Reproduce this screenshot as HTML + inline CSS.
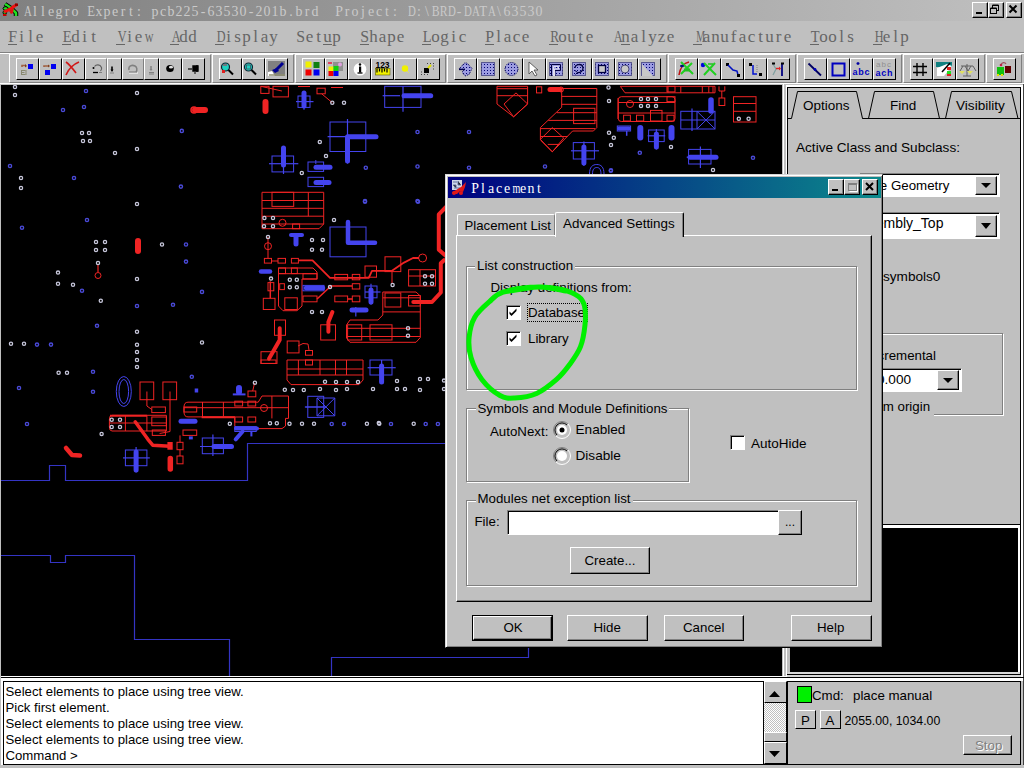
<!DOCTYPE html>
<html><head><meta charset="utf-8">
<style>
*{margin:0;padding:0;box-sizing:border-box}
html,body{width:1024px;height:768px;overflow:hidden;background:#c0c0c0;position:relative;font-family:"Liberation Sans",sans-serif;font-size:13.3px;color:#000}
.a{position:absolute}
.mono{font-family:"Liberation Mono",monospace}
.t{position:absolute;white-space:pre;line-height:1;font-size:13.3px}
.tbtn{position:absolute;width:16px;height:16px;background:#c0c0c0;border-top:1px solid #fff;border-left:1px solid #fff;border-right:1px solid #000;border-bottom:1px solid #000;box-shadow:inset -1px -1px 0 #808080}
.menu{position:absolute;top:31px;font-size:15px;line-height:15px;color:#6a6a6a;white-space:pre;font-family:"Liberation Mono",monospace;transform:scaleY(1.18);transform-origin:0 11.5px}
.menu u{text-decoration:none;display:inline-block;position:relative}
.menu u:after{content:"";position:absolute;left:0;right:1px;top:13px;height:1px;background:#6a6a6a}
.tbox{position:absolute;top:54px;height:29px;border-left:1px solid #fff;border-right:1px solid #808080;border-bottom:1px solid #808080;border-top:1px solid #fff}
.bt{position:absolute;top:58px;height:22px;border-top:1px solid #fff;border-left:1px solid #fff;border-right:1px solid #000;border-bottom:1px solid #000;background:#c0c0c0}
.btn{position:absolute;background:#c0c0c0;border-top:1px solid #fff;border-left:1px solid #fff;border-right:1px solid #000;border-bottom:1px solid #000;box-shadow:inset -1px -1px 0 #808080}
.sunk{position:absolute;border-top:1px solid #808080;border-left:1px solid #808080;border-right:1px solid #fff;border-bottom:1px solid #fff;box-shadow:inset 1px 1px 0 #000}
.grp{position:absolute;border:1px solid #808080;box-shadow:1px 1px 0 #fff, inset 1px 1px 0 #fff}
.glab{position:absolute;background:#c0c0c0;padding:0 2px;white-space:pre;line-height:1;font-size:13.3px}
.cs{position:absolute;font-family:"Liberation Serif",serif;white-space:nowrap}
.c{display:inline-block;text-align:center;font-weight:normal;font-style:normal;position:relative}
.c i{font-style:normal}
.menu2{top:28.3px;font-size:17px;line-height:17px;color:#666}
.menu2 .u:after{content:"";position:absolute;left:0;right:0;top:16px;height:1px;background:#666}
</style></head><body>
<div class="a" style="left:0;top:0;width:1024px;height:21px;background:linear-gradient(to right,#808080,#c0c0c0)"></div>
<svg class="a" style="left:0;top:0" width="22" height="21" viewBox="0 0 22 21">
<path d="M5 4 L11 8 L16 13 L16 16" stroke="#000" stroke-width="4.5" fill="none" stroke-linejoin="round"/>
<path d="M5 4 L11 8 L16 13 L16 16" stroke="#20e020" stroke-width="2.5" fill="none" stroke-linejoin="round"/>
<ellipse cx="5.5" cy="8.5" rx="2.5" ry="1.8" fill="#20e020" stroke="#000" stroke-width="1"/>
<ellipse cx="4.8" cy="12.5" rx="1.8" ry="1.8" fill="#20e020" stroke="#000" stroke-width="1"/>
<path d="M4 12 C8 10 11 9 13 7 L17 4.5" stroke="#f01010" stroke-width="3" fill="none"/>
<path d="M9 11 L14 8 L13 13 L11 14Z" fill="#e01010"/>
<rect x="3" y="14" width="3.5" height="2" fill="#c00000"/><rect x="15" y="3.5" width="3" height="2.5" fill="#900000"/>
</svg>
<div class="cs" style="left:23px;top:5px;font-size:13.9px;line-height:13.9px;color:#cacaca"><b class="c" style="width:8px"><i style="display:inline-block;transform:scaleX(0.781)">A</i></b><b class="c" style="width:8px">l</b><b class="c" style="width:8px">l</b><b class="c" style="width:8px">e</b><b class="c" style="width:8px">g</b><b class="c" style="width:8px">r</b><b class="c" style="width:8px">o</b><b class="c" style="width:8px"></b><b class="c" style="width:8px"><i style="display:inline-block;transform:scaleX(0.923)">E</i></b><b class="c" style="width:8px">x</b><b class="c" style="width:8px">p</b><b class="c" style="width:8px">e</b><b class="c" style="width:8px">r</b><b class="c" style="width:8px">t</b><b class="c" style="width:8px">:</b><b class="c" style="width:8px"></b><b class="c" style="width:8px">p</b><b class="c" style="width:8px">c</b><b class="c" style="width:8px">b</b><b class="c" style="width:8px">2</b><b class="c" style="width:8px">2</b><b class="c" style="width:8px">5</b><b class="c" style="width:8px">-</b><b class="c" style="width:8px">6</b><b class="c" style="width:8px">3</b><b class="c" style="width:8px">5</b><b class="c" style="width:8px">3</b><b class="c" style="width:8px">0</b><b class="c" style="width:8px">-</b><b class="c" style="width:8px">2</b><b class="c" style="width:8px">0</b><b class="c" style="width:8px">1</b><b class="c" style="width:8px">b</b><b class="c" style="width:8px">.</b><b class="c" style="width:8px">b</b><b class="c" style="width:8px">r</b><b class="c" style="width:8px">d</b><b class="c" style="width:8px"></b><b class="c" style="width:8px"></b><b class="c" style="width:8px">P</b><b class="c" style="width:8px">r</b><b class="c" style="width:8px">o</b><b class="c" style="width:8px">j</b><b class="c" style="width:8px">e</b><b class="c" style="width:8px">c</b><b class="c" style="width:8px">t</b><b class="c" style="width:8px">:</b><b class="c" style="width:8px"></b><b class="c" style="width:8px"><i style="display:inline-block;transform:scaleX(0.781)">D</i></b><b class="c" style="width:8px">:</b><b class="c" style="width:8px">\</b><b class="c" style="width:8px"><i style="display:inline-block;transform:scaleX(0.846)">B</i></b><b class="c" style="width:8px"><i style="display:inline-block;transform:scaleX(0.846)">R</i></b><b class="c" style="width:8px"><i style="display:inline-block;transform:scaleX(0.781)">D</i></b><b class="c" style="width:8px">-</b><b class="c" style="width:8px"><i style="display:inline-block;transform:scaleX(0.781)">D</i></b><b class="c" style="width:8px"><i style="display:inline-block;transform:scaleX(0.781)">A</i></b><b class="c" style="width:8px"><i style="display:inline-block;transform:scaleX(0.923)">T</i></b><b class="c" style="width:8px"><i style="display:inline-block;transform:scaleX(0.781)">A</i></b><b class="c" style="width:8px">\</b><b class="c" style="width:8px">6</b><b class="c" style="width:8px">3</b><b class="c" style="width:8px">5</b><b class="c" style="width:8px">3</b><b class="c" style="width:8px">0</b></div>
<div class="tbtn" style="left:972px;top:2px"></div>
<div class="tbtn" style="left:988px;top:2px"></div>
<div class="tbtn" style="left:1006px;top:2px"></div>
<svg class="a" style="left:0;top:0" width="1024" height="21" viewBox="0 0 1024 21">
<rect x="976" y="12" width="6" height="2" fill="#000"/>
<rect x="992.5" y="5.5" width="6" height="5" fill="none" stroke="#000" stroke-width="1"/><rect x="992.5" y="4.5" width="6" height="1" fill="#000"/>
<rect x="990.5" y="8.5" width="6" height="5" fill="#c0c0c0" stroke="#000" stroke-width="1"/><rect x="990.5" y="7.5" width="6" height="1" fill="#000"/>
<path d="M1009.5 5.5 L1016.5 12.5 M1016.5 5.5 L1009.5 12.5" stroke="#000" stroke-width="2"/>
</svg>
<div class="cs menu2" style="left:8px"><b class="c u" style="width:9px"><i style="display:inline-block;transform:scaleX(0.933)">F</i></b><b class="c" style="width:9px">i</b><b class="c" style="width:9px">l</b><b class="c" style="width:9px">e</b></div>
<div class="cs menu2" style="left:62px"><b class="c u" style="width:9px"><i style="display:inline-block;transform:scaleX(0.849)">E</i></b><b class="c" style="width:9px">d</b><b class="c" style="width:9px">i</b><b class="c" style="width:9px">t</b></div>
<div class="cs menu2" style="left:116px"><b class="c u" style="width:9px"><i style="display:inline-block;transform:scaleX(0.718)">V</i></b><b class="c" style="width:9px">i</b><b class="c" style="width:9px">e</b><b class="c" style="width:9px"><i style="display:inline-block;transform:scaleX(0.718)">w</i></b></div>
<div class="cs menu2" style="left:170px"><b class="c u" style="width:9px"><i style="display:inline-block;transform:scaleX(0.718)">A</i></b><b class="c" style="width:9px">d</b><b class="c" style="width:9px">d</b></div>
<div class="cs menu2" style="left:215px"><b class="c u" style="width:9px"><i style="display:inline-block;transform:scaleX(0.718)">D</i></b><b class="c" style="width:9px">i</b><b class="c" style="width:9px">s</b><b class="c" style="width:9px">p</b><b class="c" style="width:9px">l</b><b class="c" style="width:9px">a</b><b class="c" style="width:9px">y</b></div>
<div class="cs menu2" style="left:296px"><b class="c" style="width:9px"><i style="display:inline-block;transform:scaleX(0.933)">S</i></b><b class="c" style="width:9px">e</b><b class="c" style="width:9px">t</b><b class="c u" style="width:9px">u</b><b class="c" style="width:9px">p</b></div>
<div class="cs menu2" style="left:360px"><b class="c u" style="width:9px"><i style="display:inline-block;transform:scaleX(0.933)">S</i></b><b class="c" style="width:9px">h</b><b class="c" style="width:9px">a</b><b class="c" style="width:9px">p</b><b class="c" style="width:9px">e</b></div>
<div class="cs menu2" style="left:422px"><b class="c u" style="width:9px"><i style="display:inline-block;transform:scaleX(0.849)">L</i></b><b class="c" style="width:9px">o</b><b class="c" style="width:9px">g</b><b class="c" style="width:9px">i</b><b class="c" style="width:9px">c</b></div>
<div class="cs menu2" style="left:485px"><b class="c u" style="width:9px"><i style="display:inline-block;transform:scaleX(0.933)">P</i></b><b class="c" style="width:9px">l</b><b class="c" style="width:9px">a</b><b class="c" style="width:9px">c</b><b class="c" style="width:9px">e</b></div>
<div class="cs menu2" style="left:549px"><b class="c u" style="width:9px"><i style="display:inline-block;transform:scaleX(0.778)">R</i></b><b class="c" style="width:9px">o</b><b class="c" style="width:9px">u</b><b class="c" style="width:9px">t</b><b class="c" style="width:9px">e</b></div>
<div class="cs menu2" style="left:612px"><b class="c" style="width:9px"><i style="display:inline-block;transform:scaleX(0.718)">A</i></b><b class="c u" style="width:9px">n</b><b class="c" style="width:9px">a</b><b class="c" style="width:9px">l</b><b class="c" style="width:9px">y</b><b class="c" style="width:9px">z</b><b class="c" style="width:9px">e</b></div>
<div class="cs menu2" style="left:693px"><b class="c u" style="width:9px"><i style="display:inline-block;transform:scaleX(0.583)">M</i></b><b class="c" style="width:9px">a</b><b class="c" style="width:9px">n</b><b class="c" style="width:9px">u</b><b class="c" style="width:9px">f</b><b class="c" style="width:9px">a</b><b class="c" style="width:9px">c</b><b class="c" style="width:9px">t</b><b class="c" style="width:9px">u</b><b class="c" style="width:9px">r</b><b class="c" style="width:9px">e</b></div>
<div class="cs menu2" style="left:810px"><b class="c u" style="width:9px"><i style="display:inline-block;transform:scaleX(0.849)">T</i></b><b class="c" style="width:9px">o</b><b class="c" style="width:9px">o</b><b class="c" style="width:9px">l</b><b class="c" style="width:9px">s</b></div>
<div class="cs menu2" style="left:873px"><b class="c u" style="width:9px"><i style="display:inline-block;transform:scaleX(0.718)">H</i></b><b class="c" style="width:9px">e</b><b class="c" style="width:9px">l</b><b class="c" style="width:9px">p</b></div>
<div class="a" style="left:0;top:52px;width:1024px;height:1px;background:#808080"></div>
<div class="a" style="left:0;top:53px;width:1024px;height:1px;background:#fff"></div>
<div class="a" style="left:0;top:83px;width:1024px;height:1px;background:#fff"></div>
<div class="tbox" style="left:9px;width:202px"></div>
<div class="tbox" style="left:212px;width:82px"></div>
<div class="tbox" style="left:295px;width:151px"></div>
<div class="tbox" style="left:447px;width:220px"></div>
<div class="tbox" style="left:668px;width:128px"></div>
<div class="tbox" style="left:797px;width:105px"></div>
<div class="tbox" style="left:903px;width:82px"></div>
<div class="tbox" style="left:986px;width:36px"></div>
<div class="bt" style="left:16px;width:23px"></div>
<div class="bt" style="left:39px;width:23px"></div>
<div class="bt" style="left:62px;width:23px"></div>
<div class="bt" style="left:85px;width:22px;border-right-color:#808080"></div>
<div class="bt" style="left:107px;width:15px"></div>
<div class="bt" style="left:122px;width:22px;border-right-color:#808080"></div>
<div class="bt" style="left:144px;width:15px"></div>
<div class="bt" style="left:159px;width:23px"></div>
<div class="bt" style="left:182px;width:23px"></div>
<div class="bt" style="left:219px;width:23px"></div>
<div class="bt" style="left:242px;width:23px"></div>
<div class="bt" style="left:265px;width:23px"></div>
<div class="bt" style="left:302px;width:23px"></div>
<div class="bt" style="left:325px;width:23px"></div>
<div class="bt" style="left:348px;width:23px"></div>
<div class="bt" style="left:371px;width:23px"></div>
<div class="bt" style="left:394px;width:23px"></div>
<div class="bt" style="left:417px;width:23px"></div>
<div class="bt" style="left:454px;width:23px"></div>
<div class="bt" style="left:477px;width:23px"></div>
<div class="bt" style="left:500px;width:23px"></div>
<div class="bt" style="left:523px;width:23px"></div>
<div class="bt" style="left:546px;width:23px"></div>
<div class="bt" style="left:569px;width:23px"></div>
<div class="bt" style="left:592px;width:23px"></div>
<div class="bt" style="left:615px;width:23px"></div>
<div class="bt" style="left:638px;width:23px"></div>
<div class="bt" style="left:675px;width:23px"></div>
<div class="bt" style="left:698px;width:23px"></div>
<div class="bt" style="left:721px;width:23px"></div>
<div class="bt" style="left:744px;width:23px"></div>
<div class="bt" style="left:767px;width:23px"></div>
<div class="bt" style="left:804px;width:23px"></div>
<div class="bt" style="left:827px;width:23px"></div>
<div class="bt" style="left:850px;width:23px"></div>
<div class="bt" style="left:873px;width:23px"></div>
<div class="bt" style="left:910px;width:23px"></div>
<div class="bt" style="left:933px;width:23px"></div>
<div class="bt" style="left:956px;width:23px"></div>
<div class="bt" style="left:993px;width:23px"></div>
<svg class="a" style="left:0;top:0" width="1024" height="85" viewBox="0 0 1024 85">
<!-- TB1 -->
<rect x="28" y="64" width="5" height="5" fill="#0000f0"/>
<path d="M22 67 L22 65.5 L26 65.5" stroke="#a06040" stroke-width="1.6" fill="none"/><path d="M25 64 L27 66 L25 67.5Z" fill="#804020"/>
<path d="M21.5 70.5 h4 M21.5 72.5 h3 M21.5 74.5 h4 M21.5 70 v5 M26 70 v5" stroke="#8a8a70" stroke-width="1"/>
<rect x="51" y="64" width="5" height="5" fill="#0000f0"/><rect x="45" y="70" width="5" height="5" fill="#0000f0"/>
<path d="M44 67 L44 66 L49 66" stroke="#a06040" stroke-width="1.6" fill="none"/><path d="M48 64.5 L50 66 L48 67.5Z" fill="#804020"/>
<path d="M66 62 C70 65 73 69 76 73 M79 62 C74 64 69 68 66 75" stroke="#d01818" stroke-width="1.6" fill="none"/>
<path d="M93 72.5 h5" stroke="#000" stroke-width="1.3"/><circle cx="93.5" cy="68" r="1" fill="#000"/>
<path d="M94.5 66.5 C96 64.5 100 64 101.5 67.5 C102 69 101 70.5 100.5 71" stroke="#606060" stroke-width="1.2" fill="none"/>
<path d="M99 72.5 h3" stroke="#808080" stroke-width="1"/>
<path d="M112 66.5 v4" stroke="#000" stroke-width="1.6"/><path d="M110.5 69.5 L113.5 69.5 L112 72Z" fill="#000"/><path d="M110 73 h4" stroke="#808080" stroke-width="1"/>
<path d="M129 70 C128 66 132 64.5 135 66 C137 67 137.5 70 136 72" stroke="#808080" stroke-width="1.5" fill="none"/><path d="M129 73 h9" stroke="#fff" stroke-width="1"/><path d="M129 72 h8" stroke="#808080" stroke-width="1.2"/>
<path d="M151 66 v4" stroke="#808080" stroke-width="1.5"/><path d="M149.5 69 h3 l-1.5 2Z" fill="#808080"/><path d="M149 72.5 h5 M149 74 h5" stroke="#808080" stroke-width="1"/>
<ellipse cx="170" cy="68.5" rx="3.8" ry="3.5" fill="#000"/><ellipse cx="171" cy="67.2" rx="2" ry="1.4" fill="#e0e0e0"/>
<path d="M188 69 h4" stroke="#000" stroke-width="1.2"/><path d="M193 66 h5 v5 h-5Z M197 65 v7" stroke="#000" stroke-width="1.4" fill="#000"/><path d="M195 72 v2" stroke="#000" stroke-width="1"/>
<!-- TB2 -->
<circle cx="225.5" cy="67" r="4" fill="#20d0c0" stroke="#102030" stroke-width="1.2"/><path d="M228.5 70 L233 74.5" stroke="#000" stroke-width="2"/><rect x="222" y="70" width="3" height="3" fill="#e02020"/><path d="M223 65 h4" stroke="#c02040" stroke-width="1"/>
<circle cx="248.5" cy="67" r="4" fill="#20d0c0" stroke="#102030" stroke-width="1.2"/><rect x="246.5" y="65" width="4" height="4" fill="none" stroke="#405060" stroke-width="0.8"/><path d="M251.5 70 L256 74.5" stroke="#000" stroke-width="2"/>
<rect x="268" y="61" width="17" height="15" fill="#808080"/><path d="M276 70 L283 63" stroke="#000090" stroke-width="3"/><path d="M272 70 L277 68 L279 71 L275 73Z" fill="#000090"/><path d="M268 72 L272 71 L275 76 L268 76Z" fill="#fff"/><path d="M269 75 h16" stroke="#909070" stroke-width="1.5"/>
<!-- TB3 -->
<rect x="305.5" y="61.5" width="6" height="6" fill="#f0f000"/><rect x="313.5" y="62" width="6" height="6" fill="#108010"/>
<rect x="305.5" y="69.5" width="6" height="6" fill="#f00000"/><rect x="313.5" y="69.5" width="6" height="6" fill="#0000f0"/>
<rect x="333" y="62" width="10" height="9" fill="#909090"/><circle cx="340" cy="64.5" r="2" fill="#e0a0e0"/><path d="M328 63 h4" stroke="#e04060" stroke-width="2"/>
<rect x="328.5" y="66.5" width="5" height="5" fill="#f0f000"/><rect x="333.5" y="66" width="5" height="5" fill="#10d010"/>
<rect x="328.5" y="71" width="5" height="5" fill="#f00000"/><rect x="333.5" y="71" width="5" height="5" fill="#0000f0"/>
<circle cx="360" cy="69.3" r="6.3" fill="#fff"/><rect x="359" y="66.5" width="2.2" height="6" fill="#000"/><circle cx="360" cy="64.5" r="1.2" fill="#000"/><path d="M357.5 73 h5" stroke="#000" stroke-width="1.3"/>
<text x="375.5" y="67.5" font-family="Liberation Sans" font-weight="bold" font-size="8.5" fill="#000" textLength="14">123</text>
<rect x="375.5" y="68.5" width="14.5" height="6.5" fill="#f0f000" stroke="#606000" stroke-width="0.6"/><path d="M377 68.5 v4 M379.5 68.5 v3 M382 68.5 v4 M384.5 68.5 v3 M387 68.5 v4" stroke="#000" stroke-width="1.2"/>
<circle cx="405" cy="68.5" r="3.2" fill="#f0f000"/><path d="M407 71 L409 73" stroke="#e0e060" stroke-width="1"/>
<rect x="424" y="68" width="5" height="5" fill="#000"/><path d="M428 68 L431 65" stroke="#e0e000" stroke-width="2"/>
<path d="M427 63.5 h1 M430 63.5 h1 M433 63.5 h1 M433 66 h1 M433 69 h1 M421 74.5 h1 M424 74.5 h1 M427 74.5 h1 M421 72 h1" stroke="#404040" stroke-width="1"/>
<!-- TB4 -->
<defs><pattern id="dots" x="0" y="0" width="3" height="3" patternUnits="userSpaceOnUse"><rect width="3" height="3" fill="#9c9ce0"/><rect x="1" y="1" width="1" height="1" fill="#000070"/></pattern></defs>
<g fill="url(#dots)" stroke="#000050" stroke-width="1" stroke-dasharray="1 1">
<path d="M459 69 L464.5 63 L467 63 L472 68.5 L469 74.5 L465 76 L462 72 L465 69Z"/>
<rect x="481.5" y="62.5" width="13" height="13"/>
<circle cx="511.5" cy="69" r="6.5"/>
<rect x="549.5" y="62.5" width="13" height="13"/>
<rect x="572.5" y="62.5" width="13" height="13"/>
<rect x="595.5" y="62.5" width="13" height="13"/>
<rect x="618.5" y="62.5" width="13" height="13"/>
<rect x="641.5" y="62.5" width="13" height="13"/>
</g>
<path d="M459 69.5 L465 69.5" stroke="#000050" stroke-width="1.3"/>
<path d="M529 62 L529 74 L532 71 L535 76 L537 75 L534 70 L538 70Z" fill="#fff" stroke="#404040" stroke-width="0.8"/>
<path d="M551.5 76 v-11.5 h9 v6 h-5.5 v5.5" stroke="#000040" stroke-width="1" fill="none"/><path d="M553.5 76 v-9.5 h5 v2.5 h-4 v7" stroke="#e0e0f0" stroke-width="1" fill="none"/>
<path d="M575 68 C575 64 582 63 583 67.5 C583.5 71 580 73 577.5 72.5" stroke="#000040" stroke-width="1.3" fill="none"/><path d="M575 70.5 L577.5 72.5 L575.5 74.5" stroke="#000040" stroke-width="1" fill="none"/>
<rect x="598.5" y="65.5" width="7" height="7" fill="#c8c8c8" stroke="#000040" stroke-width="1.3"/>
<circle cx="625" cy="69" r="4" fill="#c8c8c8" stroke="#000040" stroke-width="0.6"/>
<path d="M642 64 L653 76 L642 76Z" fill="#c8c8c8"/>
<!-- TB5 -->
<path d="M679 75 C680 68 684 63 689 62" stroke="#c01010" stroke-width="1.6" fill="none"/><path d="M681 62 L693 74 M692 63 L681 74" stroke="#20d020" stroke-width="2"/><path d="M684 70 h6" stroke="#20c020" stroke-width="3"/><ellipse cx="682" cy="66" rx="2" ry="1.2" fill="#001080"/>
<circle cx="703" cy="65" r="2.2" fill="#0000e0"/><path d="M704 63 L716 75 M715 63 L704 75" stroke="#20d020" stroke-width="2"/><path d="M708 64 h5" stroke="#20c020" stroke-width="1.5"/>
<rect x="726" y="63" width="3" height="3" fill="#000"/><path d="M728 65 L733 70 L737 71 L738 75" stroke="#0010c0" stroke-width="1.5" fill="none"/><rect x="737" y="74" width="3" height="3" fill="#000"/>
<rect x="749" y="63" width="3" height="3" fill="#000"/><path d="M753 65 v9 h4" stroke="#0010d0" stroke-width="1.5" fill="none"/><path d="M757 65 v8" stroke="#808080" stroke-width="1" stroke-dasharray="1 1"/><rect x="759" y="73" width="3" height="3" fill="#000"/>
<path d="M773 64 L776 69 L773 75" stroke="#80a0a0" stroke-width="1.3" fill="none"/><path d="M776 68.5 h4" stroke="#e02020" stroke-width="1.4"/><path d="M779 66.5 L781 68.5 L779 70.5Z" fill="#e02020"/><path d="M782 64 v12" stroke="#000080" stroke-width="1.8"/><rect x="781" y="62.5" width="3" height="2" fill="#000"/><rect x="772" y="62.5" width="3" height="2" fill="#000"/>
<!-- TB6 -->
<path d="M808.5 63.5 L821 75.5" stroke="#000060" stroke-width="1.8"/><circle cx="815" cy="69.5" r="1.4" fill="#0000c0"/>
<rect x="832.5" y="63.5" width="12" height="12" fill="none" stroke="#0000c0" stroke-width="2"/>
<path d="M858 62 v3 M856.5 63.5 h3" stroke="#0000a0" stroke-width="1.3"/>
<text x="852.5" y="75" font-family="Liberation Sans" font-weight="bold" font-size="9" fill="#0000c0" textLength="17">abc</text>
<text x="876" y="67" font-family="Liberation Sans" font-size="8" fill="#909090" textLength="15">abc</text>
<text x="875.5" y="75.5" font-family="Liberation Sans" font-weight="bold" font-size="9" fill="#0000c0" textLength="17">ach</text>
<!-- TB7 -->
<path d="M917 63 v13 M923 63 v13 M913 66.5 h14 M913 72.5 h14" stroke="#000" stroke-width="1.4"/>
<rect x="936" y="62" width="16" height="5" fill="#108080"/><path d="M937 76 L937 68 L947 64 L952 66 L944 76Z" fill="#fff"/><path d="M942 72 L950 63" stroke="#000" stroke-width="1.5"/><rect x="947" y="67" width="4" height="3" fill="#e02020"/><rect x="947" y="71" width="4" height="3" fill="#20e020"/><rect x="947" y="74" width="4" height="2" fill="#e02020"/>
<path d="M967 64 v12 M961 66 h12 M963 66 L960 71 M965 66 L968 71 M971 66 L968 71 M973 66 L976 71 M963 76 h8" stroke="#606060" stroke-width="1"/><path d="M959 71 h6 l-3 3Z M967 71 h6 l-3 3Z" fill="#e0e060"/>
<!-- TB8 -->
<rect x="997" y="67" width="7" height="8" fill="#10c010"/><rect x="1005" y="66" width="6" height="7" fill="#600000"/><path d="M1001 65 C1002 62 1005 62 1006 64" stroke="#a05060" stroke-width="1.2" fill="none"/><circle cx="1001" cy="65" r="1.3" fill="#c02040"/><rect x="997" y="74" width="2" height="2" fill="#e0e000"/><rect x="1001" y="74" width="2" height="2" fill="#e0e000"/>
</svg>
<div class="a" style="left:1px;top:85px;width:781px;height:591px;background:#000"></div>
<svg class="a" style="left:1px;top:85px" width="781" height="591" viewBox="1 85 781 591">
<g fill="none" stroke="#3434c4" stroke-width="1.2">
<path d="M1 480.5 H49.5 V465.5 H65.5 V480.5 H247.5 V443.5 H446"/>
<path d="M1 555.5 H50.5 V562.5 H65.5 V555.5 H134.5 V639.5 H229.5 V677"/>
<path d="M331.5 677 V657.5 H528.5 V640"/>
</g>
<path d="M98.0 265.0 L98.0 272.0" fill="none" stroke="#f02424" stroke-width="1.2" stroke-linecap="butt" stroke-linejoin="round"/>
<circle cx="98.0" cy="275.5" r="3.0" fill="none" stroke="#f02424" stroke-width="1"/>
<path d="M138.0 241.0 L138.0 251.0" fill="none" stroke="#f02424" stroke-width="6" stroke-linecap="round" stroke-linejoin="round"/>
<path d="M195.0 110.0 L205.0 110.0" fill="none" stroke="#f02424" stroke-width="6" stroke-linecap="round" stroke-linejoin="round"/>
<circle cx="194.0" cy="110.0" r="3.0" fill="none" stroke="#f02424" stroke-width="1.5"/>
<rect x="260.8" y="86.3" width="8.2" height="7.1" fill="none" stroke="#f02424" stroke-width="1"/>
<rect x="273.0" y="86.3" width="15.4" height="10.6" fill="none" stroke="#f02424" stroke-width="1"/>
<path d="M260.8 86.3 L281.9 91.0" fill="none" stroke="#f02424" stroke-width="1" stroke-linecap="butt" stroke-linejoin="round"/>
<path d="M265.5 102.0 L265.5 111.0" fill="none" stroke="#f02424" stroke-width="6" stroke-linecap="round" stroke-linejoin="round"/>
<path d="M298.0 86.5 L310.0 86.5" fill="none" stroke="#f02424" stroke-width="1" stroke-linecap="butt" stroke-linejoin="round"/>
<path d="M331.0 87.5 L343.0 87.5" fill="none" stroke="#f02424" stroke-width="1" stroke-linecap="butt" stroke-linejoin="round"/>
<rect x="317.0" y="88.2" width="8.2" height="5.6" fill="none" stroke="#f02424" stroke-width="1"/>
<path d="M321.7 93.8 L332.3 102.7" fill="none" stroke="#f02424" stroke-width="1" stroke-linecap="butt" stroke-linejoin="round"/>
<path d="M262.0 192.3 L323.7 192.3 L323.7 224.0 L319.0 228.7 L262.0 228.7Z" fill="none" stroke="#f02424" stroke-width="1"/>
<path d="M262.0 200.5 L323.7 200.5" fill="none" stroke="#f02424" stroke-width="1" stroke-linecap="butt" stroke-linejoin="round"/>
<path d="M262.0 208.3 L323.7 208.3" fill="none" stroke="#f02424" stroke-width="1" stroke-linecap="butt" stroke-linejoin="round"/>
<path d="M262.0 216.2 L323.7 216.2" fill="none" stroke="#f02424" stroke-width="1" stroke-linecap="butt" stroke-linejoin="round"/>
<path d="M262.0 224.0 L323.7 224.0" fill="none" stroke="#f02424" stroke-width="1" stroke-linecap="butt" stroke-linejoin="round"/>
<path d="M308.3 192.3 L308.3 216.2" fill="none" stroke="#f02424" stroke-width="1" stroke-linecap="butt" stroke-linejoin="round"/>
<rect x="272.0" y="192.3" width="21.7" height="14.1" fill="none" stroke="#f02424" stroke-width="1"/>
<circle cx="282.5" cy="222.8" r="3.5" fill="none" stroke="#f02424" stroke-width="1"/>
<rect x="292.6" y="224.0" width="7.0" height="4.7" fill="none" stroke="#f02424" stroke-width="1"/>
<path d="M268.0 236.9 L268.0 258.4" fill="none" stroke="#f02424" stroke-width="1" stroke-linecap="butt" stroke-linejoin="round"/>
<circle cx="268.0" cy="246.2" r="3.5" fill="none" stroke="#f02424" stroke-width="1"/>
<rect x="264.4" y="258.4" width="7.1" height="4.7" fill="none" stroke="#f02424" stroke-width="1"/>
<rect x="278.0" y="258.4" width="7.5" height="4.7" fill="none" stroke="#f02424" stroke-width="1"/>
<path d="M271.5 261.0 L278.0 261.0" fill="none" stroke="#f02424" stroke-width="1" stroke-linecap="butt" stroke-linejoin="round"/>
<rect x="291.4" y="258.4" width="7.0" height="4.7" fill="none" stroke="#f02424" stroke-width="1"/>
<path d="M298.4 260.3 L312.5 260.3 L330.0 277.9 L368.7 277.9 L372.0 270.8 L392.0 270.8 L404.0 262.6 L413.0 258.0 L419.0 258.0" fill="none" stroke="#f02424" stroke-width="1.8" stroke-linecap="butt" stroke-linejoin="round"/>
<circle cx="422.6" cy="258.0" r="4.0" fill="none" stroke="#f02424" stroke-width="1"/>
<rect x="334.8" y="274.4" width="12.8" height="5.4" fill="none" stroke="#f02424" stroke-width="1"/>
<rect x="352.3" y="274.4" width="7.5" height="5.4" fill="none" stroke="#f02424" stroke-width="1"/>
<rect x="365.0" y="266.0" width="11.5" height="11.2" fill="none" stroke="#f02424" stroke-width="1"/>
<rect x="385.0" y="256.8" width="15.8" height="14.8" fill="none" stroke="#f02424" stroke-width="1"/>
<path d="M392.0 271.6 L392.0 283.0" fill="none" stroke="#f02424" stroke-width="1" stroke-linecap="butt" stroke-linejoin="round"/>
<path d="M278.5 268.0 L313.0 268.0 L317.0 272.0 L317.0 279.0 L302.0 279.0 L302.0 306.0 L297.0 310.7 L283.0 310.7 L278.5 306.0Z" fill="none" stroke="#f02424" stroke-width="1"/>
<path d="M278.5 273.7 L317.0 273.7" fill="none" stroke="#f02424" stroke-width="1" stroke-linecap="butt" stroke-linejoin="round"/>
<rect x="278.5" y="268.0" width="7.0" height="5.6" fill="none" stroke="#f02424" stroke-width="1"/>
<rect x="291.4" y="268.0" width="5.9" height="5.6" fill="none" stroke="#f02424" stroke-width="1"/>
<rect x="303.0" y="273.7" width="14.0" height="5.3" fill="none" stroke="#f02424" stroke-width="1"/>
<rect x="279.7" y="283.7" width="4.7" height="5.9" fill="none" stroke="#f02424" stroke-width="1"/>
<rect x="284.8" y="297.8" width="12.5" height="11.7" fill="none" stroke="#f02424" stroke-width="1"/>
<rect x="303.0" y="296.0" width="14.0" height="5.8" fill="none" stroke="#f02424" stroke-width="1"/>
<path d="M317.0 299.0 L331.0 286.0 L352.3 286.0" fill="none" stroke="#f02424" stroke-width="1.6" stroke-linecap="butt" stroke-linejoin="round"/>
<rect x="352.3" y="283.7" width="7.5" height="5.3" fill="none" stroke="#f02424" stroke-width="1"/>
<rect x="334.8" y="296.0" width="12.8" height="5.8" fill="none" stroke="#f02424" stroke-width="1"/>
<rect x="352.3" y="296.0" width="7.5" height="5.8" fill="none" stroke="#f02424" stroke-width="1"/>
<path d="M347.6 299.0 L352.3 299.0" fill="none" stroke="#f02424" stroke-width="1.6" stroke-linecap="butt" stroke-linejoin="round"/>
<path d="M270.3 281.4 L270.3 298.3" fill="none" stroke="#f02424" stroke-width="1.5" stroke-linecap="butt" stroke-linejoin="round"/>
<rect x="268.0" y="282.6" width="5.8" height="8.2" fill="none" stroke="#f02424" stroke-width="1"/>
<rect x="263.3" y="298.3" width="11.7" height="11.2" fill="none" stroke="#f02424" stroke-width="1"/>
<path d="M346.5 325.0 L350.0 320.0 L378.0 320.0 L382.8 315.0 L382.8 292.0 L416.0 292.0 L420.3 296.0 L420.3 337.5 L416.0 342.3 L350.0 342.3 L346.5 338.0Z" fill="none" stroke="#f02424" stroke-width="1"/>
<rect x="385.0" y="293.0" width="15.8" height="14.0" fill="none" stroke="#f02424" stroke-width="1"/>
<rect x="408.6" y="295.5" width="11.7" height="10.5" fill="none" stroke="#f02424" stroke-width="1"/>
<path d="M382.8 297.8 L420.3 297.8" fill="none" stroke="#f02424" stroke-width="1" stroke-linecap="butt" stroke-linejoin="round"/>
<path d="M382.8 311.9 L420.3 311.9" fill="none" stroke="#f02424" stroke-width="1" stroke-linecap="butt" stroke-linejoin="round"/>
<path d="M346.5 328.3 L420.3 328.3" fill="none" stroke="#f02424" stroke-width="1" stroke-linecap="butt" stroke-linejoin="round"/>
<path d="M346.5 336.5 L420.3 336.5" fill="none" stroke="#f02424" stroke-width="1" stroke-linecap="butt" stroke-linejoin="round"/>
<rect x="370.0" y="324.8" width="22.0" height="15.2" fill="none" stroke="#f02424" stroke-width="1"/>
<rect x="347.6" y="324.8" width="14.1" height="15.2" fill="none" stroke="#f02424" stroke-width="1"/>
<path d="M413.3 302.0 L432.0 302.0 L440.8 292.5 L440.8 263.3 L444.0 260.2" fill="none" stroke="#f02424" stroke-width="4" stroke-linecap="round" stroke-linejoin="round"/>
<rect x="408.6" y="269.7" width="26.9" height="16.3" fill="none" stroke="#f02424" stroke-width="1"/>
<path d="M408.6 276.0 L435.5 276.0" fill="none" stroke="#f02424" stroke-width="1" stroke-linecap="butt" stroke-linejoin="round"/>
<path d="M420.0 269.7 L420.0 286.0" fill="none" stroke="#f02424" stroke-width="1" stroke-linecap="butt" stroke-linejoin="round"/>
<rect x="320.7" y="324.8" width="14.8" height="15.2" fill="none" stroke="#f02424" stroke-width="1"/>
<path d="M328.4 331.8 L328.4 322.0 L332.4 312.0" fill="none" stroke="#f02424" stroke-width="4" stroke-linecap="round" stroke-linejoin="round"/>
<rect x="274.5" y="320.0" width="11.0" height="15.3" fill="none" stroke="#f02424" stroke-width="1"/>
<rect x="261.0" y="351.7" width="16.0" height="11.7" fill="none" stroke="#f02424" stroke-width="1"/>
<path d="M279.7 328.3 L279.7 340.0 L269.0 358.7" fill="none" stroke="#f02424" stroke-width="4" stroke-linecap="round" stroke-linejoin="round"/>
<rect x="287.2" y="341.0" width="11.8" height="11.9" fill="none" stroke="#f02424" stroke-width="1"/>
<path d="M298.0 346.0 L303.0 343.5 L308.0 344.0 L309.0 350.0" fill="none" stroke="#f02424" stroke-width="1" stroke-linecap="butt" stroke-linejoin="round"/>
<rect x="305.5" y="350.5" width="7.0" height="4.7" fill="none" stroke="#f02424" stroke-width="1"/>
<path d="M446.0 207.0 L438.8 214.4 L438.8 249.8 L446.0 256.0" fill="none" stroke="#f02424" stroke-width="4" stroke-linecap="round" stroke-linejoin="round"/>
<path d="M287.0 360.0 L363.0 360.0 L363.0 380.0 L359.0 384.6 L291.0 384.6 L287.0 380.0Z" fill="none" stroke="#f02424" stroke-width="1"/>
<path d="M298.4 360.0 L298.4 375.0" fill="none" stroke="#f02424" stroke-width="1" stroke-linecap="butt" stroke-linejoin="round"/>
<path d="M320.0 360.0 L320.0 375.0" fill="none" stroke="#f02424" stroke-width="1" stroke-linecap="butt" stroke-linejoin="round"/>
<path d="M335.5 360.0 L335.5 375.0" fill="none" stroke="#f02424" stroke-width="1" stroke-linecap="butt" stroke-linejoin="round"/>
<path d="M346.5 360.0 L346.5 375.0" fill="none" stroke="#f02424" stroke-width="1" stroke-linecap="butt" stroke-linejoin="round"/>
<path d="M287.0 369.0 L363.0 369.0" fill="none" stroke="#f02424" stroke-width="1" stroke-linecap="butt" stroke-linejoin="round"/>
<path d="M287.0 375.0 L363.0 375.0" fill="none" stroke="#f02424" stroke-width="1" stroke-linecap="butt" stroke-linejoin="round"/>
<rect x="305.5" y="360.0" width="7.0" height="5.0" fill="none" stroke="#f02424" stroke-width="1"/>
<rect x="261.0" y="360.0" width="15.0" height="3.5" fill="none" stroke="#f02424" stroke-width="1"/>
<rect x="248.0" y="391.0" width="7.8" height="5.8" fill="none" stroke="#f02424" stroke-width="1"/>
<path d="M252.7 391.0 L254.6 383.0" fill="none" stroke="#f02424" stroke-width="1" stroke-linecap="butt" stroke-linejoin="round"/>
<rect x="140.0" y="382.0" width="13.7" height="17.7" fill="none" stroke="#f02424" stroke-width="1"/>
<rect x="162.9" y="382.0" width="13.7" height="17.7" fill="none" stroke="#f02424" stroke-width="1"/>
<path d="M146.9 391.5 L146.9 406.0 L151.8 409.5" fill="none" stroke="#f02424" stroke-width="1" stroke-linecap="butt" stroke-linejoin="round"/>
<rect x="151.8" y="407.0" width="13.6" height="5.6" fill="none" stroke="#f02424" stroke-width="1"/>
<path d="M170.0 391.5 L170.0 431.5 L159.6 433.5" fill="none" stroke="#f02424" stroke-width="1" stroke-linecap="butt" stroke-linejoin="round"/>
<rect x="152.3" y="430.0" width="13.1" height="5.4" fill="none" stroke="#f02424" stroke-width="1"/>
<path d="M112 415.3 H166.4 V431 H112 Q109.4 431 109.4 427 V419 Q109.4 415.3 112 415.3Z" fill="none" stroke="#f02424" stroke-width="1"/>
<path d="M110.0 415.8 L146.9 415.8" fill="none" stroke="#f02424" stroke-width="2" stroke-linecap="butt" stroke-linejoin="round"/>
<path d="M125.4 415.3 L125.4 431.0" fill="none" stroke="#f02424" stroke-width="1" stroke-linecap="butt" stroke-linejoin="round"/>
<path d="M146.9 415.3 L146.9 431.0" fill="none" stroke="#f02424" stroke-width="1" stroke-linecap="butt" stroke-linejoin="round"/>
<path d="M109.4 423.0 L166.4 423.0" fill="none" stroke="#f02424" stroke-width="1" stroke-linecap="butt" stroke-linejoin="round"/>
<rect x="151.8" y="417.0" width="14.6" height="8.7" fill="none" stroke="#f02424" stroke-width="1"/>
<path d="M135.2 421.8 L147.9 439.3 L152.7 445.2 L170.0 446.2" fill="none" stroke="#f02424" stroke-width="3.5" stroke-linecap="round" stroke-linejoin="round"/>
<rect x="167.4" y="442" width="5.3" height="7.7" fill="#f02424"/>
<rect x="177.0" y="442.3" width="6.0" height="7.4" fill="none" stroke="#f02424" stroke-width="1"/>
<rect x="177.0" y="456.0" width="6.0" height="7.8" fill="none" stroke="#f02424" stroke-width="1"/>
<path d="M180.0 435.4 L180.0 442.3" fill="none" stroke="#f02424" stroke-width="1" stroke-linecap="butt" stroke-linejoin="round"/>
<path d="M180.0 449.7 L180.0 456.0" fill="none" stroke="#f02424" stroke-width="1" stroke-linecap="butt" stroke-linejoin="round"/>
<rect x="183.0" y="430.0" width="13.7" height="5.4" fill="none" stroke="#f02424" stroke-width="1"/>
<path d="M170.3 458.5 L170.3 469.0" fill="none" stroke="#f02424" stroke-width="5.5" stroke-linecap="round" stroke-linejoin="round"/>
<path d="M66.0 448.0 L72.0 455.0 L80.0 455.5" fill="none" stroke="#f02424" stroke-width="4.5" stroke-linecap="round" stroke-linejoin="round"/>
<path d="M188 402.2 H258.2 L262 396 H288.5 V418.4 H285.5 V426 L282 428.6 H238 L234.8 426 V416.9 H188 Q184 416.9 184 412 V407 Q184 402.2 188 402.2Z" fill="none" stroke="#f02424" stroke-width="1"/>
<path d="M201.6 417.3 L234.8 417.3" fill="none" stroke="#f02424" stroke-width="2" stroke-linecap="butt" stroke-linejoin="round"/>
<path d="M202.5 402.0 L202.5 417.0" fill="none" stroke="#f02424" stroke-width="1" stroke-linecap="butt" stroke-linejoin="round"/>
<path d="M223.4 402.0 L223.4 417.0" fill="none" stroke="#f02424" stroke-width="1" stroke-linecap="butt" stroke-linejoin="round"/>
<path d="M271.9 396.0 L271.9 418.4" fill="none" stroke="#f02424" stroke-width="1" stroke-linecap="butt" stroke-linejoin="round"/>
<path d="M184.0 407.7 L288.5 407.7" fill="none" stroke="#f02424" stroke-width="1" stroke-linecap="butt" stroke-linejoin="round"/>
<rect x="184.0" y="407.0" width="12.7" height="5.0" fill="none" stroke="#f02424" stroke-width="1"/>
<rect x="234.8" y="401.2" width="7.8" height="4.8" fill="none" stroke="#f02424" stroke-width="1"/>
<rect x="247.9" y="401.2" width="7.8" height="4.8" fill="none" stroke="#f02424" stroke-width="1"/>
<rect x="234.8" y="417.0" width="7.8" height="5.0" fill="none" stroke="#f02424" stroke-width="1"/>
<rect x="247.9" y="417.0" width="7.8" height="5.0" fill="none" stroke="#f02424" stroke-width="1"/>
<circle cx="264.0" cy="408.0" r="3.5" fill="none" stroke="#f02424" stroke-width="1"/>
<path d="M497.0 86.3 L527.6 86.3 L527.6 104.0 L513.6 116.8 L497.0 104.0Z" fill="none" stroke="#f02424" stroke-width="1"/>
<path d="M497.0 88.7 L527.6 88.7" fill="none" stroke="#f02424" stroke-width="1" stroke-linecap="butt" stroke-linejoin="round"/>
<path d="M497.0 95.7 L527.6 95.7" fill="none" stroke="#f02424" stroke-width="1" stroke-linecap="butt" stroke-linejoin="round"/>
<path d="M516.0 92.9 L527.6 104.0 L513.6 116.8 L504.0 104.0Z" fill="none" stroke="#f02424" stroke-width="1"/>
<rect x="536.5" y="86.8" width="5.2" height="6.1" fill="none" stroke="#f02424" stroke-width="1"/>
<path d="M550.0 89.5 L560.0 89.5" fill="none" stroke="#f02424" stroke-width="5" stroke-linecap="round" stroke-linejoin="round"/>
<circle cx="561.0" cy="89.5" r="2.5" fill="none" stroke="#f02424" stroke-width="1"/>
<path d="M561.7 88.5 L596.8 88.5 L596.8 127.6 L593.4 131.0 L572.6 131.0 L552.3 151.8 L540.4 140.0 L540.4 127.6 L561.7 107.3Z" fill="none" stroke="#f02424" stroke-width="1"/>
<path d="M561.7 96.4 L596.8 96.4" fill="none" stroke="#f02424" stroke-width="1" stroke-linecap="butt" stroke-linejoin="round"/>
<path d="M561.7 104.3 L596.8 104.3" fill="none" stroke="#f02424" stroke-width="1" stroke-linecap="butt" stroke-linejoin="round"/>
<path d="M556.7 112.7 L596.8 112.7" fill="none" stroke="#f02424" stroke-width="1" stroke-linecap="butt" stroke-linejoin="round"/>
<path d="M548.3 120.4 L596.8 120.4" fill="none" stroke="#f02424" stroke-width="1" stroke-linecap="butt" stroke-linejoin="round"/>
<path d="M540.4 128.6 L595.0 128.6" fill="none" stroke="#f02424" stroke-width="1" stroke-linecap="butt" stroke-linejoin="round"/>
<path d="M540.4 136.5 L567.6 136.5" fill="none" stroke="#f02424" stroke-width="1" stroke-linecap="butt" stroke-linejoin="round"/>
<path d="M547.8 144.4 L559.7 144.4" fill="none" stroke="#f02424" stroke-width="1" stroke-linecap="butt" stroke-linejoin="round"/>
<rect x="573.6" y="108.3" width="21.3" height="15.3" fill="none" stroke="#f02424" stroke-width="1"/>
<path d="M552.3 127.6 L563.7 138.0 L552.3 151.8 L540.4 139.4Z" fill="none" stroke="#f02424" stroke-width="1"/>
<path d="M618.0 98.0 L618.0 119.0" fill="none" stroke="#f02424" stroke-width="1" stroke-linecap="butt" stroke-linejoin="round"/>
<path d="M620.3 86.3 L715.0 86.3 L715.0 92.8 L625.0 92.8Z" fill="none" stroke="#f02424" stroke-width="1"/>
<path d="M668.0 86.3 L668.0 92.8" fill="none" stroke="#f02424" stroke-width="1" stroke-linecap="butt" stroke-linejoin="round"/>
<path d="M680.8 86.3 L680.8 92.8" fill="none" stroke="#f02424" stroke-width="1" stroke-linecap="butt" stroke-linejoin="round"/>
<path d="M702.3 86.3 L702.3 92.8" fill="none" stroke="#f02424" stroke-width="1" stroke-linecap="butt" stroke-linejoin="round"/>
<path d="M708.8 86.3 L708.8 92.8" fill="none" stroke="#f02424" stroke-width="1" stroke-linecap="butt" stroke-linejoin="round"/>
<path d="M713.0 86.3 L713.0 92.8" fill="none" stroke="#f02424" stroke-width="1" stroke-linecap="butt" stroke-linejoin="round"/>
<rect x="667.0" y="86.3" width="8.0" height="5.6" fill="none" stroke="#f02424" stroke-width="1"/>
<path d="M719.0 86.3 L719.0 91.0 L724.8 91.0 L724.8 86.3" fill="none" stroke="#f02424" stroke-width="1" stroke-linecap="butt" stroke-linejoin="round"/>
<rect x="719.0" y="98.0" width="5.8" height="7.5" fill="none" stroke="#f02424" stroke-width="1"/>
<path d="M721.8 91.0 L721.8 98.0" fill="none" stroke="#f02424" stroke-width="1" stroke-linecap="butt" stroke-linejoin="round"/>
<rect x="618.3" y="96.7" width="56.7" height="24.8" rx="3" fill="none" stroke="#f02424" stroke-width="1"/>
<path d="M618.3 102.5 L675.0 102.5" fill="none" stroke="#f02424" stroke-width="1" stroke-linecap="butt" stroke-linejoin="round"/>
<path d="M618.3 113.0 L675.0 113.0" fill="none" stroke="#f02424" stroke-width="1" stroke-linecap="butt" stroke-linejoin="round"/>
<circle cx="630.0" cy="104.0" r="3.5" fill="none" stroke="#f02424" stroke-width="1"/>
<rect x="667.0" y="96.7" width="8.0" height="4.9" fill="none" stroke="#f02424" stroke-width="1"/>
<rect x="623.6" y="115.2" width="6.8" height="5.8" fill="none" stroke="#f02424" stroke-width="1"/>
<rect x="636.5" y="115.2" width="7.2" height="5.8" fill="none" stroke="#f02424" stroke-width="1"/>
<rect x="650.5" y="110.4" width="11.5" height="10.6" fill="none" stroke="#f02424" stroke-width="1"/>
<rect x="667.0" y="115.2" width="7.0" height="5.8" fill="none" stroke="#f02424" stroke-width="1"/>
<rect x="733.5" y="96.7" width="22.5" height="25.3" fill="none" stroke="#f02424" stroke-width="1"/>
<path d="M733.5 103.5 L756.0 103.5" fill="none" stroke="#f02424" stroke-width="1" stroke-linecap="butt" stroke-linejoin="round"/>
<path d="M733.5 111.3 L756.0 111.3" fill="none" stroke="#f02424" stroke-width="1" stroke-linecap="butt" stroke-linejoin="round"/>
<rect x="298.0" y="96.0" width="12.0" height="11.4" fill="none" stroke="#4444ee" stroke-width="1"/>
<path d="M304.0 92.0 L304.0 109.8" fill="none" stroke="#4444ee" stroke-width="1.2" stroke-linecap="butt" stroke-linejoin="round"/>
<path d="M296.0 101.6 L313.5 101.6" fill="none" stroke="#4444ee" stroke-width="1.2" stroke-linecap="butt" stroke-linejoin="round"/>
<path d="M304.0 93.0 L304.0 106.0" fill="none" stroke="#4444ee" stroke-width="5" stroke-linecap="round" stroke-linejoin="round"/>
<path d="M382.6 95.7 L400.0 95.7" fill="none" stroke="#4444ee" stroke-width="1.2" stroke-linecap="butt" stroke-linejoin="round"/>
<rect x="384.7" y="86.3" width="36.3" height="21.1" fill="none" stroke="#4444ee" stroke-width="1"/>
<path d="M403.0 86.3 L403.0 111.7" fill="none" stroke="#4444ee" stroke-width="1.2" stroke-linecap="butt" stroke-linejoin="round"/>
<path d="M404.0 95.7 L430.7 95.7" fill="none" stroke="#4444ee" stroke-width="5" stroke-linecap="round" stroke-linejoin="round"/>
<rect x="330.0" y="122.0" width="35.8" height="29.5" fill="none" stroke="#4444ee" stroke-width="1"/>
<path d="M347.5 119.0 L347.5 163.7" fill="none" stroke="#4444ee" stroke-width="1.2" stroke-linecap="butt" stroke-linejoin="round"/>
<path d="M327.6 136.7 L378.0 136.7" fill="none" stroke="#4444ee" stroke-width="1.2" stroke-linecap="butt" stroke-linejoin="round"/>
<path d="M347.5 137.0 L347.5 161.0" fill="none" stroke="#4444ee" stroke-width="5" stroke-linecap="round" stroke-linejoin="round"/>
<path d="M348.0 136.7 L376.0 136.7" fill="none" stroke="#4444ee" stroke-width="5" stroke-linecap="round" stroke-linejoin="round"/>
<rect x="272.0" y="156.0" width="21.6" height="15.9" fill="none" stroke="#4444ee" stroke-width="1"/>
<path d="M283.5 146.0 L283.5 174.0" fill="none" stroke="#4444ee" stroke-width="1.2" stroke-linecap="butt" stroke-linejoin="round"/>
<path d="M269.0 163.7 L298.3 163.7" fill="none" stroke="#4444ee" stroke-width="1.2" stroke-linecap="butt" stroke-linejoin="round"/>
<path d="M283.5 148.0 L283.5 165.0" fill="none" stroke="#4444ee" stroke-width="5" stroke-linecap="round" stroke-linejoin="round"/>
<rect x="308.0" y="162.0" width="15.6" height="9.4" fill="none" stroke="#4444ee" stroke-width="1"/>
<path d="M316.0 167.2 L330.0 167.2" fill="none" stroke="#4444ee" stroke-width="5" stroke-linecap="round" stroke-linejoin="round"/>
<path d="M315.8 160.0 L315.8 164.0" fill="none" stroke="#4444ee" stroke-width="1" stroke-linecap="butt" stroke-linejoin="round"/>
<rect x="308.0" y="177.3" width="15.6" height="9.3" fill="none" stroke="#4444ee" stroke-width="1"/>
<path d="M316.0 182.4 L329.0 182.4" fill="none" stroke="#4444ee" stroke-width="5" stroke-linecap="round" stroke-linejoin="round"/>
<rect x="330.0" y="227.0" width="36.0" height="29.8" fill="none" stroke="#4444ee" stroke-width="1"/>
<path d="M348.0 222.0 L348.0 242.7 L375.0 242.7" fill="none" stroke="#4444ee" stroke-width="4.5" stroke-linecap="round" stroke-linejoin="round"/>
<path d="M291.0 235.0 L302.0 235.0" fill="none" stroke="#4444ee" stroke-width="4" stroke-linecap="round" stroke-linejoin="round"/>
<path d="M296.0 236.0 L296.0 244.0" fill="none" stroke="#4444ee" stroke-width="5" stroke-linecap="round" stroke-linejoin="round"/>
<path d="M261.0 271.5 L270.0 271.5" fill="none" stroke="#4444ee" stroke-width="4.5" stroke-linecap="round" stroke-linejoin="round"/>
<rect x="303.0" y="285.4" width="21.0" height="5.4" fill="none" stroke="#4444ee" stroke-width="1"/>
<path d="M306.0 288.0 L323.0 288.0" fill="none" stroke="#4444ee" stroke-width="4.5" stroke-linecap="round" stroke-linejoin="round"/>
<rect x="365.0" y="286.0" width="12.0" height="11.8" fill="none" stroke="#4444ee" stroke-width="1"/>
<path d="M371.0 283.7 L371.0 304.8" fill="none" stroke="#4444ee" stroke-width="1.2" stroke-linecap="butt" stroke-linejoin="round"/>
<path d="M365.0 292.0 L380.5 292.0" fill="none" stroke="#4444ee" stroke-width="1.2" stroke-linecap="butt" stroke-linejoin="round"/>
<path d="M371.0 290.0 L371.0 302.0" fill="none" stroke="#4444ee" stroke-width="5" stroke-linecap="round" stroke-linejoin="round"/>
<path d="M652.0 0.0 L652.0 0.0" fill="none" stroke="#4444ee" stroke-width="0.1" stroke-linecap="round" stroke-linejoin="round"/>
<path d="M352.0 310.0 L366.0 310.0" fill="none" stroke="#4444ee" stroke-width="5" stroke-linecap="round" stroke-linejoin="round"/>
<path d="M355.8 307.0 L355.8 316.6" fill="none" stroke="#4444ee" stroke-width="1.2" stroke-linecap="butt" stroke-linejoin="round"/>
<path d="M350.0 309.0 L352.0 309.0" fill="none" stroke="#4444ee" stroke-width="1" stroke-linecap="butt" stroke-linejoin="round"/>
<rect x="370.0" y="360.0" width="22.0" height="15.0" fill="none" stroke="#4444ee" stroke-width="1"/>
<path d="M381.6 360.0 L381.6 383.4" fill="none" stroke="#4444ee" stroke-width="1.2" stroke-linecap="butt" stroke-linejoin="round"/>
<path d="M367.6 367.7 L395.7 367.7" fill="none" stroke="#4444ee" stroke-width="1.2" stroke-linecap="butt" stroke-linejoin="round"/>
<path d="M381.6 366.0 L381.6 382.0" fill="none" stroke="#4444ee" stroke-width="5" stroke-linecap="round" stroke-linejoin="round"/>
<rect x="307.8" y="396.3" width="15.9" height="21.1" fill="none" stroke="#4444ee" stroke-width="1"/>
<path d="M317.0 398.0 L334.8 398.0 L334.8 415.8 L317.0 415.8Z" fill="none" stroke="#4444ee" stroke-width="1"/>
<path d="M317.0 398.0 L334.8 415.8" fill="none" stroke="#4444ee" stroke-width="1" stroke-linecap="butt" stroke-linejoin="round"/>
<path d="M334.8 398.0 L317.0 415.8" fill="none" stroke="#4444ee" stroke-width="1" stroke-linecap="butt" stroke-linejoin="round"/>
<path d="M305.5 407.0 L325.4 407.0" fill="none" stroke="#4444ee" stroke-width="1.5" stroke-linecap="round" stroke-linejoin="round"/>
<path d="M239.0 388.0 L239.0 392.0" fill="none" stroke="#4444ee" stroke-width="6" stroke-linecap="round" stroke-linejoin="round"/>
<path d="M232.8 394.4 L245.5 394.4" fill="none" stroke="#4444ee" stroke-width="2" stroke-linecap="butt" stroke-linejoin="round"/>
<rect x="234.8" y="426.6" width="21.4" height="4.9" fill="none" stroke="#4444ee" stroke-width="1"/>
<path d="M236.0 428.6 L257.0 428.6" fill="none" stroke="#4444ee" stroke-width="4" stroke-linecap="round" stroke-linejoin="round"/>
<path d="M242.6 431.5 L235.7 439.3" fill="none" stroke="#4444ee" stroke-width="4" stroke-linecap="round" stroke-linejoin="round"/>
<path d="M251.4 431.5 L251.4 436.4" fill="none" stroke="#4444ee" stroke-width="2" stroke-linecap="butt" stroke-linejoin="round"/>
<rect x="202.3" y="438.0" width="21.1" height="15.7" fill="none" stroke="#4444ee" stroke-width="1"/>
<path d="M212.9 434.5 L212.9 456.0" fill="none" stroke="#4444ee" stroke-width="1.2" stroke-linecap="butt" stroke-linejoin="round"/>
<path d="M200.0 446.5 L233.0 446.5" fill="none" stroke="#4444ee" stroke-width="1.2" stroke-linecap="butt" stroke-linejoin="round"/>
<path d="M214.0 446.5 L231.5 446.5" fill="none" stroke="#4444ee" stroke-width="5" stroke-linecap="round" stroke-linejoin="round"/>
<rect x="125.4" y="450.0" width="21.5" height="15.7" fill="none" stroke="#4444ee" stroke-width="1"/>
<path d="M136.1 447.0 L136.1 472.5" fill="none" stroke="#4444ee" stroke-width="1.2" stroke-linecap="butt" stroke-linejoin="round"/>
<path d="M123.0 457.9 L149.8 457.9" fill="none" stroke="#4444ee" stroke-width="1.2" stroke-linecap="butt" stroke-linejoin="round"/>
<path d="M136.1 452.0 L136.1 470.0" fill="none" stroke="#4444ee" stroke-width="5" stroke-linecap="round" stroke-linejoin="round"/>
<ellipse cx="123.8" cy="391.5" rx="7.5" ry="15" fill="none" stroke="#4444ee" stroke-width="1"/>
<ellipse cx="123.8" cy="391.5" rx="4.8" ry="12" fill="none" stroke="#4444ee" stroke-width="1"/>
<path d="M181.0 421.2 L195.0 421.2" fill="none" stroke="#4444ee" stroke-width="5" stroke-linecap="round" stroke-linejoin="round"/>
<rect x="194.7" y="388.5" width="3.5" height="4" fill="#4444ee"/>
<rect x="188.9" y="436.4" width="3.9" height="3" fill="#4444ee"/>
<rect x="573.3" y="142.6" width="21.1" height="16.4" fill="none" stroke="#4444ee" stroke-width="1"/>
<path d="M583.9 141.4 L583.9 166.0" fill="none" stroke="#4444ee" stroke-width="1.2" stroke-linecap="butt" stroke-linejoin="round"/>
<path d="M571.0 150.8 L599.0 150.8" fill="none" stroke="#4444ee" stroke-width="1.2" stroke-linecap="butt" stroke-linejoin="round"/>
<path d="M583.9 147.0 L583.9 163.0" fill="none" stroke="#4444ee" stroke-width="5" stroke-linecap="round" stroke-linejoin="round"/>
<path d="M589.5 174 C589.5 167 592.5 164.5 596.8 164.5 C601 164.5 604 167 604 174 M592.5 174 C592.5 169.5 594 167.5 596.8 167.5 C599.5 167.5 601 169.5 601 174" fill="none" stroke="#4444ee" stroke-width="1"/>
<rect x="680.8" y="111.3" width="34.2" height="17.7" fill="none" stroke="#4444ee" stroke-width="1"/>
<path d="M697.0 111.3 L715.0 128.9" fill="none" stroke="#4444ee" stroke-width="1" stroke-linecap="butt" stroke-linejoin="round"/>
<path d="M715.0 111.3 L697.0 128.9" fill="none" stroke="#4444ee" stroke-width="1" stroke-linecap="butt" stroke-linejoin="round"/>
<path d="M697.0 111.3 L697.0 128.9" fill="none" stroke="#4444ee" stroke-width="1" stroke-linecap="butt" stroke-linejoin="round"/>
<path d="M692.0 108.4 L692.0 130.9" fill="none" stroke="#4444ee" stroke-width="1.2" stroke-linecap="butt" stroke-linejoin="round"/>
<path d="M680.8 120.0 L715.0 120.0" fill="none" stroke="#4444ee" stroke-width="1.2" stroke-linecap="butt" stroke-linejoin="round"/>
<path d="M711.0 100.0 L711.0 111.0" fill="none" stroke="#4444ee" stroke-width="5.5" stroke-linecap="round" stroke-linejoin="round"/>
<rect x="617.3" y="126.0" width="13.3" height="5.0" fill="none" stroke="#4444ee" stroke-width="1"/>
<path d="M619.0 128.5 L629.0 128.5" fill="none" stroke="#4444ee" stroke-width="4" stroke-linecap="round" stroke-linejoin="round"/>
<path d="M626.7 131.0 L626.7 135.8" fill="none" stroke="#4444ee" stroke-width="1.5" stroke-linecap="butt" stroke-linejoin="round"/>
<path d="M640.3 128.0 L640.3 137.5" fill="none" stroke="#4444ee" stroke-width="6" stroke-linecap="round" stroke-linejoin="round"/>
<rect x="648.6" y="130.0" width="15.6" height="11.6" fill="none" stroke="#4444ee" stroke-width="1"/>
<path d="M656.4 128.9 L656.4 149.4" fill="none" stroke="#4444ee" stroke-width="1.2" stroke-linecap="butt" stroke-linejoin="round"/>
<path d="M647.6 135.8 L665.2 135.8" fill="none" stroke="#4444ee" stroke-width="1.2" stroke-linecap="butt" stroke-linejoin="round"/>
<path d="M656.4 134.0 L656.4 147.0" fill="none" stroke="#4444ee" stroke-width="5" stroke-linecap="round" stroke-linejoin="round"/>
<path d="M671.5 128.0 L671.5 137.5" fill="none" stroke="#4444ee" stroke-width="6" stroke-linecap="round" stroke-linejoin="round"/>
<rect x="688.6" y="149.4" width="22.4" height="14.6" fill="none" stroke="#4444ee" stroke-width="1"/>
<path d="M700.4 146.5 L700.4 168.0" fill="none" stroke="#4444ee" stroke-width="1.2" stroke-linecap="butt" stroke-linejoin="round"/>
<path d="M686.7 157.2 L718.0 157.2" fill="none" stroke="#4444ee" stroke-width="1.2" stroke-linecap="butt" stroke-linejoin="round"/>
<path d="M690.0 157.2 L716.0 157.2" fill="none" stroke="#4444ee" stroke-width="5" stroke-linecap="round" stroke-linejoin="round"/>
<g fill="none" stroke="#c8c8dc" stroke-width="1.3">
<circle cx="289.8" cy="279.8" r="1.6"/>
<circle cx="296.8" cy="279.8" r="1.6"/>
<circle cx="289.8" cy="287.3" r="1.6"/>
<circle cx="296.8" cy="287.3" r="1.6"/>
<circle cx="268.0" cy="237.0" r="1.6"/>
<circle cx="15.0" cy="87.0" r="1.6"/>
<circle cx="15.0" cy="95.0" r="1.6"/>
<circle cx="137.0" cy="93.0" r="1.6"/>
<circle cx="82.0" cy="133.0" r="1.6"/>
<circle cx="89.0" cy="133.0" r="1.6"/>
<circle cx="83.0" cy="141.0" r="1.6"/>
<circle cx="90.0" cy="141.0" r="1.6"/>
<circle cx="137.0" cy="149.0" r="1.6"/>
<circle cx="115.0" cy="153.0" r="1.6"/>
<circle cx="21.0" cy="178.0" r="1.6"/>
<circle cx="21.0" cy="188.0" r="1.6"/>
<circle cx="137.0" cy="204.0" r="1.6"/>
<circle cx="96.0" cy="242.0" r="1.6"/>
<circle cx="105.0" cy="242.0" r="1.6"/>
<circle cx="96.0" cy="250.0" r="1.6"/>
<circle cx="105.0" cy="250.0" r="1.6"/>
<circle cx="162.0" cy="244.5" r="1.6"/>
<circle cx="98.0" cy="263.0" r="1.6"/>
<circle cx="58.0" cy="272.6" r="1.6"/>
<circle cx="58.0" cy="283.7" r="1.6"/>
<circle cx="73.0" cy="284.8" r="1.6"/>
<circle cx="137.0" cy="279.0" r="1.6"/>
<circle cx="100.8" cy="300.8" r="1.6"/>
<circle cx="137.0" cy="331.7" r="1.6"/>
<circle cx="11.0" cy="343.7" r="1.6"/>
<circle cx="24.0" cy="343.7" r="1.6"/>
<circle cx="202.0" cy="342.5" r="1.6"/>
<circle cx="137.0" cy="344.8" r="1.6"/>
<circle cx="137.0" cy="352.0" r="1.6"/>
<circle cx="137.0" cy="360.0" r="1.6"/>
<circle cx="137.0" cy="367.0" r="1.6"/>
<circle cx="58.6" cy="372.7" r="1.6"/>
<circle cx="67.0" cy="372.7" r="1.6"/>
<circle cx="101.6" cy="433.9" r="1.6"/>
<circle cx="229.8" cy="423.7" r="1.6"/>
<circle cx="111.7" cy="419.8" r="1.6"/>
<circle cx="120.0" cy="419.8" r="1.6"/>
<circle cx="111.7" cy="427.0" r="1.6"/>
<circle cx="120.0" cy="427.0" r="1.6"/>
<circle cx="270.0" cy="423.3" r="1.6"/>
<circle cx="276.8" cy="423.3" r="1.6"/>
<circle cx="289.5" cy="423.7" r="1.6"/>
<circle cx="264.4" cy="218.0" r="1.6"/>
<circle cx="273.0" cy="218.0" r="1.6"/>
<circle cx="264.0" cy="226.3" r="1.6"/>
<circle cx="273.0" cy="226.3" r="1.6"/>
<circle cx="312.0" cy="240.0" r="1.6"/>
<circle cx="323.0" cy="240.0" r="1.6"/>
<circle cx="312.0" cy="249.8" r="1.6"/>
<circle cx="322.0" cy="249.8" r="1.6"/>
<circle cx="334.0" cy="220.0" r="1.6"/>
<circle cx="392.6" cy="285.0" r="1.6"/>
<circle cx="271.0" cy="278.6" r="1.6"/>
<circle cx="330.0" cy="287.0" r="1.6"/>
<circle cx="312.0" cy="311.9" r="1.6"/>
<circle cx="322.0" cy="311.9" r="1.6"/>
<circle cx="408.0" cy="328.3" r="1.6"/>
<circle cx="408.0" cy="335.8" r="1.6"/>
<circle cx="425.0" cy="276.2" r="1.6"/>
<circle cx="432.0" cy="276.2" r="1.6"/>
<circle cx="425.0" cy="283.7" r="1.6"/>
<circle cx="432.0" cy="283.7" r="1.6"/>
<circle cx="325.0" cy="381.8" r="1.6"/>
<circle cx="336.0" cy="382.0" r="1.6"/>
<circle cx="347.0" cy="382.0" r="1.6"/>
<circle cx="358.0" cy="382.0" r="1.6"/>
<circle cx="284.8" cy="389.8" r="1.6"/>
<circle cx="293.0" cy="390.0" r="1.6"/>
<circle cx="303.8" cy="390.0" r="1.6"/>
<circle cx="320.0" cy="389.0" r="1.6"/>
<circle cx="336.0" cy="390.0" r="1.6"/>
<circle cx="347.0" cy="389.0" r="1.6"/>
<circle cx="373.0" cy="389.0" r="1.6"/>
<circle cx="397.0" cy="381.0" r="1.6"/>
<circle cx="397.0" cy="389.0" r="1.6"/>
<circle cx="405.0" cy="389.0" r="1.6"/>
<circle cx="420.0" cy="379.0" r="1.6"/>
<circle cx="428.0" cy="379.0" r="1.6"/>
<circle cx="420.0" cy="390.0" r="1.6"/>
<circle cx="254.9" cy="382.7" r="1.6"/>
<circle cx="444.0" cy="380.6" r="1.6"/>
<circle cx="444.0" cy="389.0" r="1.6"/>
<circle cx="302.0" cy="423.7" r="1.6"/>
<circle cx="314.0" cy="423.7" r="1.6"/>
<circle cx="366.9" cy="423.7" r="1.6"/>
<circle cx="379.3" cy="423.7" r="1.6"/>
<circle cx="413.7" cy="423.7" r="1.6"/>
<circle cx="378.8" cy="423.0" r="1.6"/>
<circle cx="332.3" cy="102.7" r="1.6"/>
<circle cx="344.0" cy="102.7" r="1.6"/>
<circle cx="319.8" cy="141.9" r="1.6"/>
<circle cx="326.0" cy="156.0" r="1.6"/>
<circle cx="301.8" cy="173.0" r="1.6"/>
<circle cx="608.5" cy="87.5" r="1.6"/>
<circle cx="609.0" cy="101.0" r="1.6"/>
<circle cx="609.0" cy="132.8" r="1.6"/>
<circle cx="613.8" cy="137.7" r="1.6"/>
<circle cx="611.0" cy="145.0" r="1.6"/>
<circle cx="671.0" cy="146.9" r="1.6"/>
<circle cx="713.0" cy="170.0" r="1.6"/>
<circle cx="641.0" cy="99.0" r="1.6"/>
<circle cx="648.0" cy="99.0" r="1.6"/>
<circle cx="656.0" cy="99.0" r="1.6"/>
<circle cx="641.0" cy="105.9" r="1.6"/>
<circle cx="648.0" cy="105.9" r="1.6"/>
<circle cx="656.0" cy="105.9" r="1.6"/>
<circle cx="738.8" cy="118.8" r="1.6"/>
<circle cx="748.6" cy="118.8" r="1.6"/>
</g><g fill="none" stroke="#4a4ad8" stroke-width="1.4">
<circle cx="86.0" cy="91.0" r="1.6"/>
<circle cx="63.0" cy="110.0" r="1.6"/>
<circle cx="84.0" cy="107.0" r="1.6"/>
<circle cx="10.0" cy="166.0" r="1.6"/>
<circle cx="74.0" cy="178.0" r="1.6"/>
<circle cx="22.0" cy="227.7" r="1.6"/>
<circle cx="87.0" cy="220.0" r="1.6"/>
<circle cx="186.0" cy="244.5" r="1.6"/>
<circle cx="186.0" cy="261.6" r="1.6"/>
<circle cx="82.0" cy="290.7" r="1.6"/>
<circle cx="202.0" cy="291.9" r="1.6"/>
<circle cx="137.0" cy="306.0" r="1.6"/>
<circle cx="173.0" cy="304.8" r="1.6"/>
<circle cx="97.0" cy="325.8" r="1.6"/>
<circle cx="37.0" cy="344.6" r="1.6"/>
<circle cx="51.0" cy="344.6" r="1.6"/>
<circle cx="93.0" cy="371.8" r="1.6"/>
<circle cx="191.8" cy="376.8" r="1.6"/>
<circle cx="19.0" cy="388.0" r="1.6"/>
<circle cx="93.0" cy="391.8" r="1.6"/>
<circle cx="27.0" cy="424.0" r="1.6"/>
<circle cx="365.0" cy="201.7" r="1.6"/>
<circle cx="418.0" cy="201.7" r="1.6"/>
<circle cx="331.7" cy="424.0" r="1.6"/>
<circle cx="344.0" cy="424.0" r="1.6"/>
<circle cx="391.0" cy="424.0" r="1.6"/>
<circle cx="425.7" cy="424.0" r="1.6"/>
<circle cx="437.9" cy="424.0" r="1.6"/>
<circle cx="181.8" cy="130.9" r="1.6"/>
<circle cx="180.9" cy="186.6" r="1.6"/>
<circle cx="365.8" cy="167.7" r="1.6"/>
<circle cx="365.0" cy="201.0" r="1.6"/>
<circle cx="417.5" cy="132.0" r="1.6"/>
<circle cx="469.0" cy="132.0" r="1.6"/>
<circle cx="417.5" cy="166.5" r="1.6"/>
<circle cx="469.0" cy="167.7" r="1.6"/>
<circle cx="545.0" cy="166.5" r="1.6"/>
<circle cx="417.5" cy="201.0" r="1.6"/>
<circle cx="610.8" cy="170.7" r="1.6"/>
<circle cx="639.8" cy="152.8" r="1.6"/>
<circle cx="611.0" cy="170.3" r="1.6"/>
<circle cx="753.0" cy="157.8" r="1.6"/>
</g>
</svg>
<!-- right panel frame -->
<div class="a" style="left:783px;top:83px;width:1px;height:594px;background:#fff"></div>
<div class="a" style="left:786px;top:85px;width:1px;height:592px;background:#fff"></div>
<div class="a" style="left:786px;top:85px;width:237px;height:2px;background:#fff"></div>
<div class="a" style="left:787px;top:87px;width:234px;height:438px;border:1px solid #000;background:#c0c0c0"></div>
<div class="a" style="left:1021px;top:85px;width:2px;height:592px;background:#fff"></div>
<div class="a" style="left:1023px;top:84px;width:1px;height:684px;background:#404040"></div>
<!-- tabs -->
<svg class="a" style="left:0;top:0" width="1024" height="130" viewBox="0 0 1024 130">
<path d="M788 118.5 H791.5 L797.5 91.5 H856.5 L862.5 118.5 H868.5 L874.5 91.5 H933.5 L939.5 118.5 H945.5 L951.5 91.5 H1011.5 L1018 118.5 H1020" fill="none" stroke="#000" stroke-width="1"/>
<path d="M862.5 118.5 H1020" stroke="#000" stroke-width="1"/>
</svg>
<div class="t" style="left:803px;top:99px;font-size:13.5px">Options</div>
<div class="t" style="left:890px;top:98.5px;font-size:13.5px">Find</div>
<div class="t" style="left:956px;top:98.5px;font-size:13.6px">Visibility</div>
<div class="t" style="left:796px;top:140.5px;font-size:13.6px">Active Class and Subclass:</div>
<!-- combo 1 -->
<div class="sunk" style="left:860px;top:173px;width:140px;height:24px;background:#fff"></div>
<div class="t" style="left:835.5px;top:179px;font-size:13.3px">Package Geometry</div>
<div class="btn" style="left:975px;top:176px;width:22px;height:19px"></div>
<svg class="a" style="left:980px;top:182px" width="12" height="7"><path d="M1 1 H11 L6 6Z" fill="#000"/></svg>
<!-- combo 2 -->
<div class="sunk" style="left:860px;top:212px;width:140px;height:27px;background:#fff"></div>
<div class="t" style="left:852.4px;top:216px;font-size:14px">Assembly_Top</div>
<div class="btn" style="left:975px;top:215px;width:22px;height:22px"></div>
<svg class="a" style="left:980px;top:222px" width="12" height="8"><path d="M1 1 H11 L6 7Z" fill="#000"/></svg>
<div class="t" style="left:883px;top:270px;font-size:13.6px">symbols0</div>
<!-- group -->
<div class="grp" style="left:860px;top:333px;width:143px;height:82px"></div>
<div class="t" style="left:866.5px;top:348.5px;font-size:13.3px">Incremental</div>
<div class="sunk" style="left:860px;top:368px;width:102px;height:24px;background:#fff"></div>
<div class="t" style="left:877px;top:372.5px;font-size:13.6px">0.000</div>
<div class="btn" style="left:937px;top:370px;width:22px;height:20px"></div>
<svg class="a" style="left:942px;top:377px" width="12" height="7"><path d="M1 1 H11 L6 6Z" fill="#000"/></svg>
<div class="a" style="left:870px;top:408px;width:64px;height:12px;background:#c0c0c0"></div>
<div class="t" style="left:862.8px;top:400px;font-size:13.3px">Form origin</div>
<!-- world view -->
<div class="a" style="left:788px;top:525px;width:232px;height:152px;background:#c0c0c0"></div>
<div class="a" style="left:788px;top:525px;width:232px;height:3px;background:#fff"></div>
<div class="a" style="left:790px;top:528px;width:228px;height:144px;background:#000"></div>
<div class="a" style="left:1018px;top:526px;width:2px;height:148px;background:#fff"></div>
<div class="a" style="left:1020px;top:525px;width:1px;height:152px;background:#000"></div>
<div class="a" style="left:788px;top:672px;width:232px;height:2px;background:#d8d8d8"></div>
<div class="a" style="left:787px;top:674px;width:234px;height:1px;background:#000"></div>
<div class="a" style="left:787px;top:675px;width:234px;height:2px;background:#d8d8d8"></div>

<!-- bottom frame -->
<div class="a" style="left:0;top:676px;width:786px;height:1px;background:#fff"></div>
<div class="a" style="left:0;top:677px;width:1024px;height:1px;background:#000"></div>
<div class="a" style="left:0;top:678px;width:1023px;height:3px;background:#fff"></div>
<div class="a" style="left:0;top:676px;width:1px;height:92px;background:#c0c0c0"></div>
<div class="a" style="left:1px;top:678px;width:2px;height:90px;background:#fff"></div>
<!-- console -->
<div class="a" style="left:3px;top:681px;width:784px;height:84px;border:1px solid #000;background:#fff"></div>
<div class="t" style="left:5.5px;top:684px;font-size:13.2px;line-height:16px">Select elements to place using tree view.
Pick first element.
Select elements to place using tree view.
Select elements to place using tree view.
Command &gt;</div>
<!-- scrollbar -->
<div class="a" style="left:763px;top:681px;width:1px;height:84px;background:#000"></div>
<div class="bt" style="left:764px;top:681px;width:23px;height:22px;background:#c0c0c0"></div>
<div class="a" style="left:764px;top:703px;width:22px;height:30px;background-color:#e8e8e8;background-image:repeating-conic-gradient(#c0c0c0 0 25%,#fff 0 50%);background-size:2px 2px"></div>
<div class="bt" style="left:764px;top:732px;width:23px;height:10px"></div>
<div class="bt" style="left:764px;top:742px;width:23px;height:22px"></div>
<svg class="a" style="left:764px;top:681px" width="23" height="84" viewBox="764 681 23 84"><path d="M769 697 L780 697 L774.5 691Z M769 751 L780 751 L774.5 757Z" fill="#000"/></svg>
<!-- status panel -->
<div class="a" style="left:787px;top:681px;width:234px;height:84px;border:1px solid #000;background:#c0c0c0"></div>
<div class="a" style="left:797px;top:686px;width:15px;height:17px;border:1px solid #000;background:#00f000"></div>
<div class="t" style="left:812px;top:688.5px;font-size:13.3px">Cmd:</div><div class="t" style="left:853px;top:688.5px;font-size:13.3px">place manual</div>
<div class="btn" style="left:795px;top:710px;width:21px;height:19px;box-shadow:none"></div>
<div class="btn" style="left:820px;top:710px;width:21px;height:19px;box-shadow:none"></div>
<div class="t" style="left:801px;top:714px;font-size:13.3px">P</div>
<div class="t" style="left:825.5px;top:714px;font-size:13.3px">A</div>
<div class="t" style="left:844.5px;top:715px;font-size:12.3px">2055.00, 1034.00</div>
<div class="btn" style="left:963px;top:735px;width:49px;height:20px"></div>
<div class="t" style="left:975px;top:739px;font-size:13.3px;color:#808080;text-shadow:1px 1px 0 #fff">Stop</div>
<div class="a" style="left:0;top:765px;width:1024px;height:3px;background:#c0c0c0"></div>
<!-- DIALOG -->
<div class="a" style="left:445px;top:174px;width:438px;height:474px;background:#c0c0c0;border-top:1px solid #d8d8d8;border-left:1px solid #d8d8d8;border-right:1px solid #000;border-bottom:1px solid #000;box-shadow:inset 1px 1px 0 #fff, inset -1px -1px 0 #808080"></div>
<div class="a" style="left:448px;top:177px;width:433px;height:21px;background:linear-gradient(to right,#000080,#0c8a8c)"></div>
<svg class="a" style="left:450px;top:178px" width="20" height="19" viewBox="0 0 20 19">
<rect x="2" y="2" width="10" height="10" fill="#d0d8e8"/><path d="M3 4 h4 M8 3 v4 h3 M3 7 h3 v3 M4 10 h6" stroke="#6070a0" stroke-width="1"/>
<path d="M2 15 C5 12 8 11 11 9 L16 4 L15 9 L13 14 L10 13 L7 16 L4 16Z" fill="#e01818"/>
<circle cx="4" cy="15" r="2" fill="#e01818"/><circle cx="11" cy="15" r="2" fill="#e01818"/>
</svg>
<div class="cs" style="left:471px;top:182.3px;font-size:13.9px;line-height:13.9px;color:#fff"><b class="c" style="width:8px">P</b><b class="c" style="width:8px">l</b><b class="c" style="width:8px">a</b><b class="c" style="width:8px">c</b><b class="c" style="width:8px">e</b><b class="c" style="width:8px"><i style="display:inline-block;transform:scaleX(0.725)">m</i></b><b class="c" style="width:8px">e</b><b class="c" style="width:8px">n</b><b class="c" style="width:8px">t</b></div>
<div class="tbtn" style="left:828px;top:179px"></div>
<div class="tbtn" style="left:844px;top:179px"></div>
<div class="tbtn" style="left:862px;top:179px"></div>
<svg class="a" style="left:0;top:0" width="900" height="200" viewBox="0 0 900 200">
<rect x="832" y="189" width="6" height="2" fill="#000"/>
<rect x="848.5" y="183.5" width="8" height="7" fill="none" stroke="#808080" stroke-width="1"/><rect x="848.5" y="183" width="8" height="2" fill="#808080"/>
<path d="M849.5 191.5 h8 v-7" stroke="#fff" stroke-width="1" fill="none"/>
<path d="M866 183 L873 190 M873 183 L866 190" stroke="#000" stroke-width="2"/>
</svg>

<!-- tab panel -->
<div class="a" style="left:456px;top:235px;width:416px;height:367px;border-top:1px solid #fff;border-left:1px solid #fff;border-right:1px solid #000;border-bottom:1px solid #000;box-shadow:inset -1px -1px 0 #808080"></div>
<div class="a" style="left:457px;top:214px;width:98px;height:22px;border-top:1px solid #fff;border-left:1px solid #fff;border-right:1px solid #808080;background:#c0c0c0;border-radius:2px 2px 0 0"></div>
<div class="a" style="left:457px;top:235px;width:98px;height:1px;background:#fff"></div>
<div class="a" style="left:555px;top:212px;width:129px;height:25px;border-top:1px solid #fff;border-left:1px solid #fff;border-right:1px solid #000;box-shadow:inset -1px 0 0 #808080;background:#c0c0c0;border-radius:2px 2px 0 0"></div>
<div class="t" style="left:464.5px;top:218.5px;font-size:13.2px">Placement List</div>
<div class="t" style="left:563px;top:216.5px;font-size:13.4px">Advanced Settings</div>

<!-- group 1 -->
<div class="grp" style="left:466px;top:266px;width:391px;height:124px"></div>
<div class="glab" style="left:475px;top:259px">List construction</div>
<div class="t" style="left:490.5px;top:280.8px">Display definitions from:</div>
<div class="sunk" style="left:506px;top:305px;width:15px;height:15px;background:#fff"></div>
<div class="sunk" style="left:506px;top:331px;width:15px;height:15px;background:#fff"></div>
<svg class="a" style="left:0;top:0" width="900" height="360" viewBox="0 0 900 360">
<path d="M509.5 311.5 L511.5 313.5 L516.5 308.5 L516.5 311 L511.5 316 L509.5 314Z" fill="#000"/>
<path d="M509.5 337.5 L511.5 339.5 L516.5 334.5 L516.5 337 L511.5 342 L509.5 340Z" fill="#000"/>
<g shape-rendering="crispEdges" fill="#000">
<rect x="527" y="303" width="1" height="1"/><rect x="527" y="321" width="1" height="1"/><rect x="529" y="303" width="1" height="1"/><rect x="529" y="321" width="1" height="1"/><rect x="531" y="303" width="1" height="1"/><rect x="531" y="321" width="1" height="1"/><rect x="533" y="303" width="1" height="1"/><rect x="533" y="321" width="1" height="1"/><rect x="535" y="303" width="1" height="1"/><rect x="535" y="321" width="1" height="1"/><rect x="537" y="303" width="1" height="1"/><rect x="537" y="321" width="1" height="1"/><rect x="539" y="303" width="1" height="1"/><rect x="539" y="321" width="1" height="1"/><rect x="541" y="303" width="1" height="1"/><rect x="541" y="321" width="1" height="1"/><rect x="543" y="303" width="1" height="1"/><rect x="543" y="321" width="1" height="1"/><rect x="545" y="303" width="1" height="1"/><rect x="545" y="321" width="1" height="1"/><rect x="547" y="303" width="1" height="1"/><rect x="547" y="321" width="1" height="1"/><rect x="549" y="303" width="1" height="1"/><rect x="549" y="321" width="1" height="1"/><rect x="551" y="303" width="1" height="1"/><rect x="551" y="321" width="1" height="1"/><rect x="553" y="303" width="1" height="1"/><rect x="553" y="321" width="1" height="1"/><rect x="555" y="303" width="1" height="1"/><rect x="555" y="321" width="1" height="1"/><rect x="557" y="303" width="1" height="1"/><rect x="557" y="321" width="1" height="1"/><rect x="559" y="303" width="1" height="1"/><rect x="559" y="321" width="1" height="1"/><rect x="561" y="303" width="1" height="1"/><rect x="561" y="321" width="1" height="1"/><rect x="563" y="303" width="1" height="1"/><rect x="563" y="321" width="1" height="1"/><rect x="565" y="303" width="1" height="1"/><rect x="565" y="321" width="1" height="1"/><rect x="567" y="303" width="1" height="1"/><rect x="567" y="321" width="1" height="1"/><rect x="569" y="303" width="1" height="1"/><rect x="569" y="321" width="1" height="1"/><rect x="571" y="303" width="1" height="1"/><rect x="571" y="321" width="1" height="1"/><rect x="573" y="303" width="1" height="1"/><rect x="573" y="321" width="1" height="1"/><rect x="575" y="303" width="1" height="1"/><rect x="575" y="321" width="1" height="1"/><rect x="577" y="303" width="1" height="1"/><rect x="577" y="321" width="1" height="1"/><rect x="579" y="303" width="1" height="1"/><rect x="579" y="321" width="1" height="1"/><rect x="581" y="303" width="1" height="1"/><rect x="581" y="321" width="1" height="1"/><rect x="583" y="303" width="1" height="1"/><rect x="583" y="321" width="1" height="1"/><rect x="585" y="303" width="1" height="1"/><rect x="585" y="321" width="1" height="1"/><rect x="587" y="303" width="1" height="1"/><rect x="587" y="321" width="1" height="1"/><rect x="527" y="303" width="1" height="1"/><rect x="587" y="303" width="1" height="1"/><rect x="527" y="305" width="1" height="1"/><rect x="587" y="305" width="1" height="1"/><rect x="527" y="307" width="1" height="1"/><rect x="587" y="307" width="1" height="1"/><rect x="527" y="309" width="1" height="1"/><rect x="587" y="309" width="1" height="1"/><rect x="527" y="311" width="1" height="1"/><rect x="587" y="311" width="1" height="1"/><rect x="527" y="313" width="1" height="1"/><rect x="587" y="313" width="1" height="1"/><rect x="527" y="315" width="1" height="1"/><rect x="587" y="315" width="1" height="1"/><rect x="527" y="317" width="1" height="1"/><rect x="587" y="317" width="1" height="1"/><rect x="527" y="319" width="1" height="1"/><rect x="587" y="319" width="1" height="1"/><rect x="527" y="321" width="1" height="1"/><rect x="587" y="321" width="1" height="1"/></g>
</svg>
<div class="t" style="left:528px;top:305.7px">Database</div>
<div class="t" style="left:528px;top:331.6px">Library</div>

<!-- group 2 -->
<div class="grp" style="left:466px;top:408px;width:223px;height:74px"></div>
<div class="glab" style="left:475.5px;top:401.6px">Symbols and Module Definitions</div>
<div class="t" style="left:490px;top:424.5px">AutoNext:</div>
<svg class="a" style="left:0;top:0" width="900" height="480" viewBox="0 0 900 480">
<g>
<path d="M556 436 A6 6 0 0 1 568 424" stroke="#808080" stroke-width="1" fill="none"/>
<circle cx="562" cy="430" r="5" fill="#fff"/>
<path d="M557 435 A5 5 0 0 1 567 425" stroke="#000" stroke-width="1" fill="none"/>
<path d="M568 424 A6 6 0 0 1 556 436" stroke="#fff" stroke-width="1" fill="none"/>
<circle cx="562" cy="430" r="2.5" fill="#000"/>
</g>
<g>
<path d="M556 462 A6 6 0 0 1 568 450" stroke="#808080" stroke-width="1" fill="none"/>
<circle cx="562" cy="456" r="5" fill="#fff"/>
<path d="M557 461 A5 5 0 0 1 567 451" stroke="#000" stroke-width="1" fill="none"/>
<path d="M568 450 A6 6 0 0 1 556 462" stroke="#fff" stroke-width="1" fill="none"/>
</g>
</svg>
<div class="t" style="left:575.5px;top:423px;font-size:13.6px">Enabled</div>
<div class="t" style="left:575.5px;top:449px;font-size:13.6px">Disable</div>
<div class="sunk" style="left:730px;top:435px;width:15px;height:15px;background:#fff"></div>
<div class="t" style="left:751px;top:436.6px;font-size:13.5px">AutoHide</div>

<!-- group 3 -->
<div class="grp" style="left:466px;top:500px;width:391px;height:86px"></div>
<div class="glab" style="left:475.5px;top:492.2px">Modules net exception list</div>
<div class="t" style="left:474.5px;top:515.3px">File:</div>
<div class="sunk" style="left:507px;top:510px;width:272px;height:25px;background:#fff"></div>
<div class="btn" style="left:778px;top:510px;width:24px;height:25px"></div>
<div class="t" style="left:785px;top:516px;font-size:12px">...</div>
<div class="btn" style="left:570px;top:547px;width:80px;height:27px"></div>
<div class="t" style="left:584.5px;top:553.5px">Create...</div>

<!-- buttons -->
<div class="a" style="left:472px;top:615px;width:81px;height:26px;border:1px solid #000"></div>
<div class="btn" style="left:473px;top:616px;width:79px;height:24px"></div>
<div class="t" style="left:503.5px;top:620.6px">OK</div>
<div class="btn" style="left:567px;top:615px;width:81px;height:26px"></div>
<div class="t" style="left:593.5px;top:620.6px">Hide</div>
<div class="btn" style="left:664px;top:615px;width:80px;height:26px"></div>
<div class="t" style="left:683px;top:620.6px">Cancel</div>
<div class="btn" style="left:791px;top:615px;width:81px;height:26px"></div>
<div class="t" style="left:817px;top:620.6px">Help</div>

<!-- green annotation -->
<svg class="a" style="left:0;top:0" width="900" height="420" viewBox="0 0 900 420">
<path d="M503.7 291.9 C509.5 291.1 528.7 287.4 538.4 287.0 C548.1 286.6 555.3 287.9 562.0 289.5 C568.7 291.1 574.8 293.8 578.5 296.5 C582.2 299.2 583.4 301.3 584.5 306.0 C585.6 310.7 585.7 317.9 585.0 324.7 C584.3 331.5 583.1 339.9 580.5 346.6 C577.9 353.3 573.4 359.3 569.4 364.8 C565.4 370.3 562.1 374.6 556.6 379.4 C551.1 384.2 543.6 390.4 536.6 393.5 C529.6 396.6 520.8 397.7 514.7 398.0 C508.6 398.3 505.5 398.6 500.0 395.5 C494.5 392.4 486.7 385.7 481.9 379.4 C477.1 373.1 473.1 364.5 471.0 357.5 C468.9 350.5 468.5 344.1 469.1 337.4 C469.7 330.7 471.2 323.3 474.6 317.4 C478.0 311.5 484.4 306.1 489.2 301.9 C494.0 297.6 495.5 294.4 503.7 291.9 C511.9 289.4 528.0 287.1 538.4 287.0 C548.8 286.9 561.4 290.3 566.0 291.0" fill="none" stroke="#00f000" stroke-width="5" stroke-linecap="round" stroke-linejoin="round"/>
</svg>
</body></html>
